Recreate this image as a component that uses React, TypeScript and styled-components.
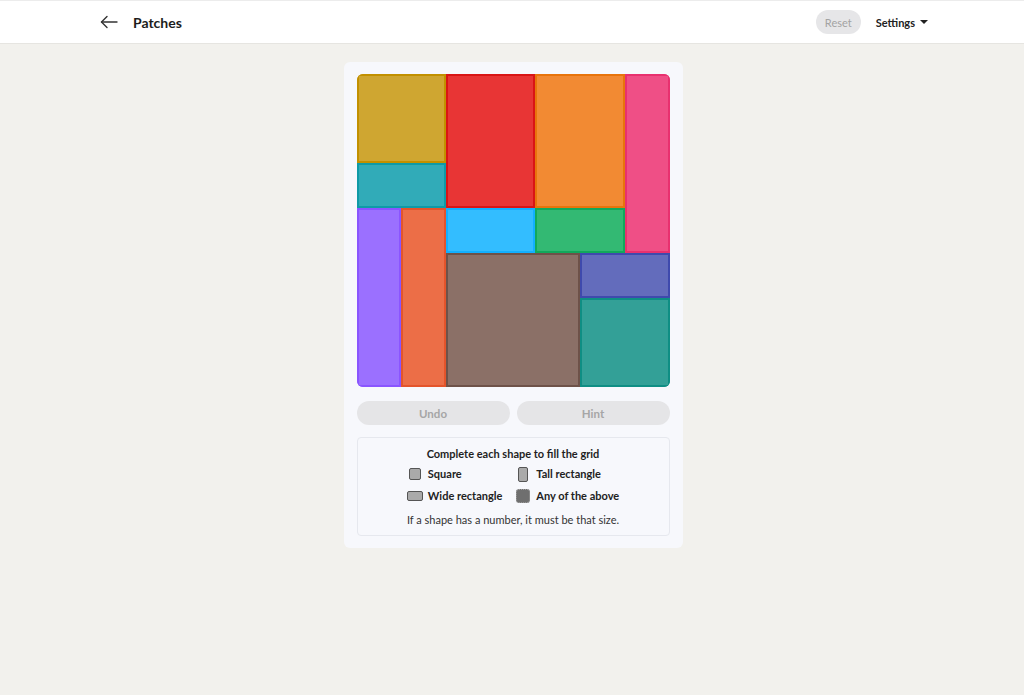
import React from "react";
import styled, { createGlobalStyle } from "styled-components";

const Global = createGlobalStyle`
  html, body { margin: 0; padding: 0; }
  body {
    background: #f2f1ed;
    font-family: Lato, "Noto Sans", "Liberation Sans", sans-serif;
    color: #1f1f1f;
  }
`;

const Header = styled.header`
  background: #ffffff;
  border-top: 1px solid #ececec;
  border-bottom: 1px solid #e6e5e1;
  height: 42px;
`;

const HeaderInner = styled.div`
  max-width: 850px;
  margin: 0 auto;
  height: 100%;
  padding: 0 9px 0 12px;
  box-sizing: border-box;
  display: flex;
  align-items: center;
`;

const BackButton = styled.button`
  border: none;
  background: none;
  padding: 0;
  width: 20px;
  height: 20px;
  display: flex;
  align-items: center;
  justify-content: center;
  color: #333;
  cursor: pointer;
`;

const Title = styled.h1`
  margin: 0 0 0 14px;
  font-size: 14px;
  font-weight: 700;
  color: #1c1c1c;
  flex: 1;
`;

const PillButton = styled.button`
  border: none;
  background: #e6e6e8;
  color: #a3a3a3;
  border-radius: 12px;
  font-family: inherit;
  font-size: 11px;
  height: 24px;
  padding: 0 9px;
`;

const SettingsButton = styled.button`
  border: none;
  background: none;
  font-family: inherit;
  font-size: 11px;
  font-weight: 700;
  color: #222;
  margin-left: 15px;
  display: flex;
  align-items: center;
  gap: 5px;
  padding: 0;
`;

const Caret = styled.span`
  width: 0;
  height: 0;
  border-left: 4px solid transparent;
  border-right: 4px solid transparent;
  border-top: 4px solid #222;
`;

const Main = styled.main`
  display: flex;
  justify-content: center;
  padding: 18px 0 0 2px;
`;

const Card = styled.section`
  width: 339px;
  box-sizing: border-box;
  background: #f7f8fc;
  border-radius: 6px;
  padding: 12px 13px 12px;
  display: flex;
  flex-direction: column;
`;

const Board = styled.div`
  width: 313px;
  height: 313px;
  display: grid;
  grid-template-columns: repeat(7, 1fr);
  grid-template-rows: repeat(7, 1fr);
  border-radius: 6px;
  overflow: hidden;
`;

const Piece = styled.div<{ $fill: string; $edge: string; $c: string; $r: string }>`
  grid-column: ${(p) => p.$c};
  grid-row: ${(p) => p.$r};
  background: ${(p) => p.$fill};
  border: 2px solid ${(p) => p.$edge};
`;

const ButtonRow = styled.div`
  display: grid;
  grid-template-columns: 1fr 1fr;
  gap: 7px;
  margin-top: 14px;
`;

const ActionButton = styled.button`
  border: none;
  background: #e5e5e7;
  color: #a6a6a6;
  border-radius: 12px;
  height: 24px;
  font-family: inherit;
  font-size: 11.5px;
  font-weight: 700;
`;

const Legend = styled.div`
  margin-top: 12px;
  border: 1px solid #e6e8ee;
  border-radius: 4px;
  padding: 8px 0 7px;
  display: flex;
  flex-direction: column;
  align-items: center;
  font-size: 11px;
`;

const LegendTitle = styled.div`
  font-weight: 700;
  color: #1f1f1f;
  line-height: 16px;
`;

const LegendGrid = styled.div`
  display: grid;
  grid-template-columns: auto auto;
  column-gap: 13px;
  row-gap: 6px;
  margin-top: 4px;
`;

const LegendItem = styled.div`
  display: flex;
  align-items: center;
  gap: 5px;
  font-weight: 700;
  color: #222;
  line-height: 16px;
`;

const IconSlot = styled.span`
  width: 16px;
  display: flex;
  justify-content: center;
`;

const ShapeIcon = styled.span<{ $w: number; $h: number }>`
  width: ${(p) => p.$w}px;
  height: ${(p) => p.$h}px;
  box-sizing: border-box;
  border-radius: 2px;
  background: #aaaaaa;
  border: 1px solid #555;
`;

const AnyIcon = styled.span`
  width: 14px;
  height: 14px;
  box-sizing: border-box;
  border-radius: 3px;
  background: #6f6f6f;
  border: 1.5px dotted #a0a0a0;
`;

const Note = styled.div`
  margin-top: 8px;
  color: #333;
  line-height: 16px;
`;

const pieces = [
  { fill: "#cfa631", edge: "#c29000", c: "1 / 3", r: "1 / 3" },
  { fill: "#31abb8", edge: "#0e9aa7", c: "1 / 3", r: "3 / 4" },
  { fill: "#e83535", edge: "#d91515", c: "3 / 5", r: "1 / 4" },
  { fill: "#f28a33", edge: "#e8740c", c: "5 / 7", r: "1 / 4" },
  { fill: "#ef4f86", edge: "#e8316f", c: "7 / 8", r: "1 / 5" },
  { fill: "#9b70ff", edge: "#8a55ff", c: "1 / 2", r: "4 / 8" },
  { fill: "#ec6e47", edge: "#e4542b", c: "2 / 3", r: "4 / 8" },
  { fill: "#33bdff", edge: "#12b0ff", c: "3 / 5", r: "4 / 5" },
  { fill: "#33b973", edge: "#12a85b", c: "5 / 7", r: "4 / 5" },
  { fill: "#8b7067", edge: "#6e5249", c: "3 / 6", r: "5 / 8" },
  { fill: "#636cbc", edge: "#3f4aad", c: "6 / 8", r: "5 / 6" },
  { fill: "#33a097", edge: "#0f8e84", c: "6 / 8", r: "6 / 8" },
];

export default function App() {
  return (
    <>
      <Global />
      <Header>
        <HeaderInner>
          <BackButton aria-label="Back">
            <svg width="18" height="14" viewBox="0 0 18 14" fill="none" stroke="#333" strokeWidth="1.4" strokeLinecap="round" strokeLinejoin="round">
              <path d="M17 7H1.5" />
              <path d="M7 1.5L1.5 7L7 12.5" />
            </svg>
          </BackButton>
          <Title>Patches</Title>
          <PillButton disabled>Reset</PillButton>
          <SettingsButton>
            Settings <Caret />
          </SettingsButton>
        </HeaderInner>
      </Header>
      <Main>
        <Card>
          <Board>
            {pieces.map((p, i) => (
              <Piece key={i} $fill={p.fill} $edge={p.edge} $c={p.c} $r={p.r} />
            ))}
          </Board>
          <ButtonRow>
            <ActionButton disabled>Undo</ActionButton>
            <ActionButton disabled>Hint</ActionButton>
          </ButtonRow>
          <Legend>
            <LegendTitle>Complete each shape to fill the grid</LegendTitle>
            <LegendGrid>
              <LegendItem>
                <IconSlot><ShapeIcon $w={12} $h={12} /></IconSlot>
                Square
              </LegendItem>
              <LegendItem>
                <IconSlot><ShapeIcon $w={10} $h={15} /></IconSlot>
                Tall rectangle
              </LegendItem>
              <LegendItem>
                <IconSlot><ShapeIcon $w={16} $h={10} /></IconSlot>
                Wide rectangle
              </LegendItem>
              <LegendItem>
                <IconSlot><AnyIcon /></IconSlot>
                Any of the above
              </LegendItem>
            </LegendGrid>
            <Note>If a shape has a number, it must be that size.</Note>
          </Legend>
        </Card>
      </Main>
    </>
  );
}
